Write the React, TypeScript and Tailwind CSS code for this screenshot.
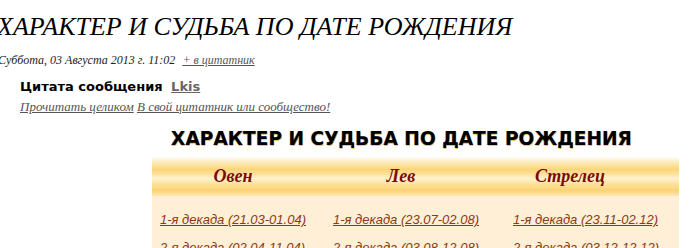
import React from 'react';

const serif = { fontFamily: '"Liberation Serif", "DejaVu Serif", serif' };

const rows = [
  ['1-я декада (21.03-01.04)', '1-я декада (23.07-02.08)', '1-я декада (23.11-02.12)'],
  ['2-я декада (02.04-11.04)', '2-я декада (03.08-12.08)', '2-я декада (03.12-12.12)'],
];

export default function App() {
  return (
    <div className="w-[691px] h-[248px] overflow-hidden bg-white relative">
      <h1 className="ml-[-3px] pt-[12px] text-[26px] leading-[30px] italic font-normal text-black whitespace-nowrap" style={serif}>
        ХАРАКТЕР И СУДЬБА ПО ДАТЕ РОЖДЕНИЯ
      </h1>
      <div className="mt-[11px] ml-[-2px] text-[12px] leading-[15px] italic text-[#222] whitespace-nowrap" style={serif}>
        Суббота, 03 Августа 2013 г. 11:02
        <a className="ml-[7px] underline text-[#555]">+ в цитатник</a>
      </div>

      <div className="pl-[20px] mt-[11px]">
        <div className="text-[13px] leading-[16px] font-bold text-black font-['DejaVu_Sans',sans-serif]">
          Цитата сообщения <a className="ml-1 underline text-[#666]">Lkis</a>
        </div>
        <div className="mt-[4px] text-[13px] leading-[16px] italic text-[#555] whitespace-nowrap" style={serif}>
          <a className="underline">Прочитать целиком</a> <a className="underline">В свой цитатник или сообщество!</a>
        </div>
      </div>

      <div className="ml-[152px] w-[527px]">
        <h2 className="mt-[13px] pr-[28px] text-center text-[18.6px] leading-[22px] font-bold text-black whitespace-nowrap font-['DejaVu_Sans',sans-serif] [text-shadow:0.5px_0.5px_0_#e8c46a,-0.5px_0_0_#9ab4e8]">
          ХАРАКТЕР И СУДЬБА ПО ДАТЕ РОЖДЕНИЯ
        </h2>
        <div className="mt-[7px] h-[39px] grid grid-cols-[162px_174px_164px] items-center bg-[linear-gradient(to_bottom,#fffdf6_0%,#fde6ab_18%,#fcd47a_32%,#fde3a2_45%,#fff2cd_55%,#fde3a0_68%,#fbd374_85%,#fde6b0_100%)]">
          {['Овен', 'Лев', 'Стрелец'].map((h) => (
            <div key={h} className="text-center text-[18px] font-bold italic text-[#7a0b0b]" style={serif}>
              {h}
            </div>
          ))}
        </div>
        <div className="bg-[#feefd6] pt-[10px]">
          {rows.map((r, i) => (
            <div key={i} className="grid grid-cols-[173px_180px_174px] h-[28px]">
              {r.map((c) => (
                <div key={c} className="pl-[8px] whitespace-nowrap">
                  <a className="underline italic text-[13px] text-[#8b3a12] font-['Liberation_Sans',sans-serif]">{c}</a>
                </div>
              ))}
            </div>
          ))}
        </div>
      </div>
    </div>
  );
}
